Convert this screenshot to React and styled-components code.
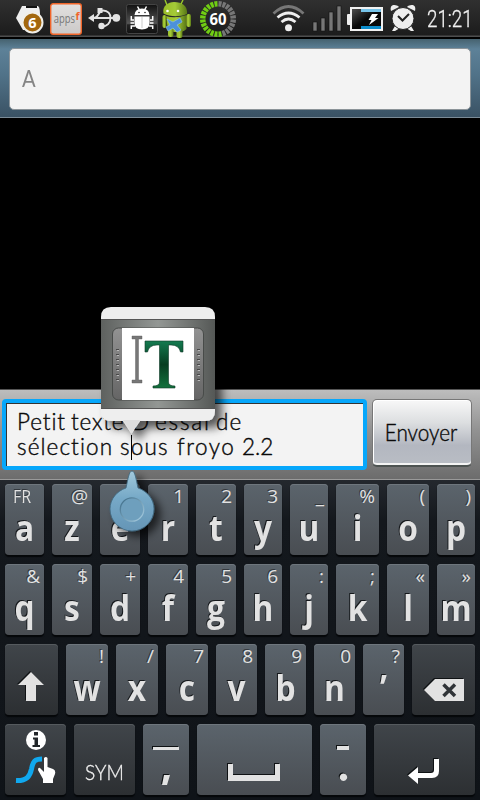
import React from "react";
import styled, { createGlobalStyle } from "styled-components";

const Global = createGlobalStyle`
  * { box-sizing: border-box; }
  body { margin: 0; background: #000; }
  svg { display: block; flex: none; }
`;

const Screen = styled.main`
  position: relative;
  width: 480px;
  height: 800px;
  overflow: hidden;
  background: #000;
  display: flex;
  flex-direction: column;
  font-family: Lato, sans-serif;
`;

const StatusBar = styled.header`
  height: 39px;
  display: flex;
  background: linear-gradient(#303030, #1c1c1c 35px, #4e4e4e 36px, #4e4e4e 37px, #000 37px);
`;

const Clock = styled.time`
  flex: none;
  width: 60px;
  margin-left: 7px;
  font: 300 23.5px/38px Roboto, sans-serif;
  color: #f2f2f2;
  transform: scaleX(0.8);
  transform-origin: left;
  -webkit-text-stroke: 0.3px #f2f2f2;
`;

const Recipients = styled.section`
  height: 79px;
  padding: 9px 9px 8px;
  border-bottom: 1px solid #7b8b97;
  background: linear-gradient(#46626f, #5d8198 10px, #517389 35px, #3a5264);
`;

const RecipientField = styled.div`
  height: 62px;
  padding-left: 12px;
  border: 1px solid #8b9398;
  border-radius: 5px;
  background: #f3f3f3;
  color: #858585;
  font: 24px/58px Lato, sans-serif;
`;

const RecipientText = styled.span`
  display: inline-block;
  transform: scaleX(0.84);
  transform-origin: left;
`;

const Thread = styled.section`
  height: 271px;
`;

const Composer = styled.section`
  height: 91px;
  display: flex;
  gap: 5px;
  padding: 9px 7px 0 2px;
  border-top: 1px solid #555;
  border-bottom: 1px solid #999;
  background: linear-gradient(#bdbdbd, #929292 45%, #6c6c6c);
`;

const MessageField = styled.div`
  width: 365px;
  height: 71px;
  padding: 6px 0 0 11px;
  border: 4px solid #06a7fb;
  border-radius: 4px;
  background: #f3f3f3;
  box-shadow: inset 1px 1px 0 #333;
`;

const Line = styled.div`
  display: flex;
  height: 24.5px;
  color: #090909;
  font-size: 22.5px;
  font-weight: 300;
  line-height: 25px;
  white-space: pre;
  -webkit-text-stroke: 0.4px #090909;
`;

const Word = styled.span`
  flex: none;
  width: ${(p) => p.$w}px;
  letter-spacing: ${(p) => p.$ls || 0}px;
`;

const SendButton = styled.button`
  width: 100px;
  height: 68px;
  padding: 0;
  border: 1px solid #777;
  border-bottom: 2px solid #4d5351;
  border-radius: 5px;
  background: linear-gradient(#f8f8f8, #dcdee0 35%, #b3b7c0 70%, #b9bdc4);
  box-shadow: inset 0 -2px 0 #f4f4f4, inset 1px 1px 0 #fff;
  color: #0a0a0a;
  font: 300 22.5px/60px Lato, sans-serif;
  -webkit-text-stroke: 0.4px #0a0a0a;
`;

const SendLabel = styled.span`
  display: block;
  margin: 0 -10px;
  transform: translateX(-1px) scaleX(0.92);
`;

const Keyboard = styled.section`
  height: 320px;
  display: flex;
  flex-direction: column;
  gap: 9px;
  padding: 4px 5px 5px;
  background: linear-gradient(#24282e, #14181d 40px, #0f1318);
`;

const KeyRow = styled.div`
  display: flex;
  gap: 8px;
  height: 71px;
`;

const KeyCap = styled.div`
  flex: none;
  width: ${(p) => p.$w}px;
  height: 71px;
  border-radius: 4px;
  background: ${(p) =>
    p.$dark ? "linear-gradient(#40454a, #2c2f32)" : "linear-gradient(#5b646c, #494d52)"};
  box-shadow: inset 0 1px 0 ${(p) => (p.$dark ? "#555a5e" : "#6e767d")}, 0 2px 1px #050709;
  color: #e2e2e2;
  font-family: "Open Sans", "Noto Sans", sans-serif;
  text-align: center;
`;

const Hint = styled.div`
  height: 24px;
  padding: 0 ${(p) => (p.$left ? 0 : 4)}px 0 ${(p) => (p.$left ? 8 : 0)}px;
  font-size: 19px;
  line-height: 24px;
  text-align: ${(p) => (p.$left ? "left" : "right")};
  text-shadow: -1px -1px 0 #33383d;
`;

const HintText = styled.span`
  display: inline-block;
  transform: scaleX(${(p) => p.$sx});
  transform-origin: ${(p) => (p.$sx < 1 ? "left" : "right")};
`;

const Letter = styled.div`
  height: 40px;
  margin: 0 -10px;
  font-size: 36px;
  font-weight: 700;
  line-height: 40px;
  transform: scaleX(0.88);
  text-shadow: -1px -1px 0 #15181b;
`;

const SymLabel = styled.div`
  padding-top: 35px;
  color: #f0f0f0;
  font: 300 22px/26px Lato, sans-serif;
  -webkit-text-stroke: 0.35px #f0f0f0;
  transform: scaleX(0.87);
`;

const Popup = styled.div`
  position: absolute;
  left: 91px;
  top: 297px;
`;

const Handle = styled.div`
  position: absolute;
  left: 100px;
  top: 465px;
`;

const Caret = styled.div`
  position: absolute;
  left: 131px;
  top: 435px;
  width: 1px;
  height: 25px;
  background: #000;
`;

function Cell({ x, w, children }) {
  return (
    <svg width={w} height="39" viewBox={`${x} 0 ${w} 39`}>
      {children}
    </svg>
  );
}

function Status() {
  const ticks = Array.from({ length: 24 }, (_, i) => i);
  return (
    <StatusBar>
      <Cell x={0} w={47}>
        <path d="M22 6H38Q40 8 40 14V22Q40 29 38 30H23L16 18Z" fill="#eee" />
        <rect x="26" y="6" width="11" height="2" fill="#111" />
        <circle cx="32.5" cy="22.5" r="10" fill="#a3670e" stroke="#f0eee8" strokeWidth="2" />
        <text x="32.5" y="28" textAnchor="middle" fill="#fff" fontFamily="Open Sans" fontWeight="700" fontSize="14.5">6</text>
      </Cell>
      <Cell x={47} w={39}>
        <defs>
          <linearGradient id="apps" x2="0" y2="1"><stop stopColor="#e2e0df" /><stop offset="1" stopColor="#cbc9c8" /></linearGradient>
        </defs>
        <rect x="50.7" y="3.7" width="30.6" height="30.6" rx="2.5" fill="url(#apps)" stroke="#f16529" strokeWidth="1.4" />
        <text x="53.7" y="22.5" fill="#777" fontFamily="Open Sans" fontSize="12.5" textLength="21.3" lengthAdjust="spacingAndGlyphs">apps</text>
        <text x="75.6" y="19.5" fill="#f16529" fontFamily="Open Sans" fontWeight="700" fontSize="10.5">f</text>
      </Cell>
      <Cell x={86} w={37}>
        <g fill="none" stroke="#e4e4e4" strokeWidth="1.9">
          <path d="M92 18H116M94 18C99 18 98 10.5 103 10.5C108 10.5 110.5 14 110.500 18C110.500 23 107 26.500 102 26.500" />
        </g>
        <path d="M88 18L94 14V22ZM97.500 8h5v5h-5Z" fill="#e4e4e4" />
        <circle cx="116.3" cy="17.8" r="3.9" fill="#e4e4e4" /><circle cx="101.5" cy="26" r="3.200" fill="#e4e4e4" />
      </Cell>
      <Cell x={123} w={37}>
        <defs><linearGradient id="bug" x2="0" y2="1"><stop stopColor="#111" /><stop offset=".65" stopColor="#555" /><stop offset=".7" stopColor="#242424" /><stop offset="1" stopColor="#111" /></linearGradient></defs>
        <rect x="126.5" y="4.5" width="31" height="29" rx="2" fill="url(#bug)" stroke="#444" />
        <path d="M134.500 15Q135 8.500 142 8.500T149.500 15ZM134.500 16.500H149.500V23Q149.500 29.500 142 29.500T134.500 23Z" fill="#fff" />
        <path d="M137.500 6.500L139.500 10M146.500 6.500L144.500 10M134 20H131.300V16M150 20H152.700V16M134 23H130.500M150 23H153.500M135 26H131.300V29M149 26H152.700V29" fill="none" stroke="#fff" strokeWidth="1.5" />
        <circle cx="139" cy="12.500" r=".8" fill="#222" /><circle cx="145" cy="12.500" r=".8" fill="#222" /><path d="M142 17V28" stroke="#aaa" strokeWidth=".6" />
      </Cell>
      <Cell x={160} w={37}>
        <defs><linearGradient id="droid" x2="1" y2="0"><stop stopColor="#98bd28" /><stop offset=".5" stopColor="#a5cb38" /><stop offset="1" stopColor="#587715" /></linearGradient></defs>
        <g fill="url(#droid)">
          <path d="M163.500 13.500C162 6 168 2 174 2C182 2 188 6 187 14C180 17 170 17 163.500 13.500Z" />
          <path d="M166 16Q175 19 186.500 15V29Q180 35 168 30Z" />
          <rect x="162.500" y="15" width="4" height="13" rx="2" /><rect x="186.500" y="14" width="4.500" height="13" rx="2" />
          <rect x="168" y="28" width="5.500" height="9" rx="2.500" /><rect x="176.500" y="28" width="6" height="10" rx="2.500" />
        </g>
        <path d="M167 5L165 0M181 4L183 0" stroke="#9aca2b" strokeWidth="1.4" />
        <circle cx="167.500" cy="11" r="1.300" fill="#fff" /><circle cx="178" cy="11" r="1.300" fill="#fff" />
        <path d="M167 19L173 22L180 18L182 22L177 25L181 30L177 32L173 28L168 31L166 27L170 25Z" fill="#4c91da" stroke="#88bce9" strokeWidth=".7" />
      </Cell>
      <Cell x={197} w={41}>
        {ticks.map((i) => (
          <path key={i} d="M216.300 1H219.700L219.300 6.500H216.700Z" fill={i < 11 ? "#777" : "#70ce13"} transform={`rotate(${i * 15 + 7.5} 218 19)`} />
        ))}
        <text x="218" y="24.500" textAnchor="middle" fill="#fff" fontFamily="Open Sans" fontWeight="700" fontSize="15.5" textLength="17" lengthAdjust="spacingAndGlyphs">60</text>
      </Cell>
      <Cell x={238} w={72}>
        <g fill="none" strokeLinecap="butt" strokeWidth="2.8">
          <path d="M273.5 13.5Q288.5 -.5 303.500 13.5" stroke="#777" />
          <path d="M277.500 17.5Q288.500 8.500 299.500 17.500M281.500 22Q288.500 16 295.500 22" stroke="#eee" />
        </g>
        <circle cx="288.500" cy="27.800" r="3.500" fill="#eee" />
      </Cell>
      <Cell x={310} w={34}>
        <g fill="#777" stroke="#111" strokeWidth=".6"><rect x="313" y="22" width="4" height="9" /><rect x="321" y="18" width="4" height="13" /><rect x="329" y="12" width="4" height="19" /><rect x="337" y="6" width="4" height="25" /></g>
      </Cell>
      <Cell x={344} w={42}>
        <defs><linearGradient id="battery" x2="1" y2="1"><stop stopColor="#555" /><stop offset=".5" stopColor="#080808" /></linearGradient></defs>
        <rect x="347" y="14" width="5" height="11" rx="1" fill="#eee" />
        <rect x="351" y="8" width="31" height="22" fill="url(#battery)" stroke="#f1f1f1" strokeWidth="2" />
        <path d="M361 9H381V12H361Z" fill="#77c3e8" /><path d="M361 26H381V29H361Z" fill="#0b8bc9" />
        <path d="M372 14H378L375 18H378.500L369 25L371.500 20H368.500Z" fill="#fff" />
      </Cell>
      <Cell x={386} w={34}>
        <g fill="#eee">
          <path d="M391 11C389 4 396 4 399 7ZM415 11C417 4 410 4 407 7Z" />
          <path d="M395 26L392 31H395L400 28ZM411 26L414 31H411L406 28Z" />
          <circle cx="403" cy="18.500" r="11" stroke="#222" />
        </g>
        <path d="M398 16L402.500 20.500L409 14" fill="none" stroke="#222" strokeWidth="2" />
      </Cell>
      <Clock>21:21</Clock>
    </StatusBar>
  );
}

function Key({ w, hint, letter, left }) {
  return (
    <KeyCap $w={w}>
      <Hint $left={left}>
        <HintText $sx={left ? 0.84 : 1}>{hint}</HintText>
      </Hint>
      <Letter>{letter}</Letter>
    </KeyCap>
  );
}

function IconKey({ w, dark, children }) {
  return (
    <KeyCap $w={w} $dark={dark}>
      <svg width={w} height="71" viewBox={`0 0 ${w} 71`}>{children}</svg>
    </KeyCap>
  );
}

function Embossed({ d, fill = "#e2e2e2" }) {
  return (
    <>
      <path d={d} fill="#0f1214" transform="translate(-1 -1)" />
      <path d={d} fill={fill} />
    </>
  );
}

const top = [["FR", "a", 39], ["@", "z", 40], ["", "e", 40], ["1", "r", 40], ["2", "t", 40], ["3", "y", 38], ["_", "u", 38], ["%", "i", 43], ["(", "o", 42], [")", "p", 38]];
const middle = [["&", "q", 39], ["$", "s", 40], ["+", "d", 40], ["4", "f", 40], ["5", "g", 40], ["6", "h", 38], [":", "j", 38], [";", "k", 43], ["«", "l", 42], ["»", "m", 38]];
const lower = [["!", "w", 42], ["/", "x", 42], ["7", "c", 42], ["8", "v", 41], ["9", "b", 41], ["0", "n", 41]];

const renderKeys = (keys) => keys.map(([hint, letter, w]) => (
  <Key key={letter} hint={hint} letter={letter} w={w} left={hint === "FR"} />
));

function SelectionPopup() {
  return (
    <Popup>
      <svg width="145" height="155" viewBox="91 297 145 155">
        <defs>
          <filter id="shade" x="-20%" y="-20%" width="150%" height="150%"><feDropShadow dx="7" dy="7" stdDeviation="5" floodOpacity=".65" /></filter>
          <linearGradient id="metal" x2="1" y2="0"><stop stopColor="#5e615f" /><stop offset=".5" stopColor="#939794" /><stop offset="1" stopColor="#555856" /></linearGradient>
          <linearGradient id="rail" x2="0" y2="1"><stop stopColor="#929292" /><stop offset="1" stopColor="#656565" /></linearGradient>
          <linearGradient id="green" x2="0" y2="1"><stop stopColor="#147a50" /><stop offset=".5" stopColor="#063d20" /><stop offset="1" stopColor="#13713d" /></linearGradient>
        </defs>
        <path d="M111 307H205Q215 307 215 317V411Q215 421 205 421H140L131.500 433.500L123 421H111Q101 421 101 411V317Q101 307 111 307Z" fill="#eee" filter="url(#shade)" />
        <path d="M123 420H140L131.500 433.500Z" fill="#dedede" />
        <rect x="101" y="319" width="114" height="89.500" fill="url(#metal)" />
        <path d="M101 319.500H215M101 408.500H215" stroke="#555" />
        <rect x="112.500" y="328" width="91" height="72" rx="6" fill="url(#rail)" stroke="#484b49" />
        <rect x="122" y="328" width="72" height="72" fill="#fff" />
        {[0, 1, 2, 3, 4, 5, 6].map((i) => (
          <g key={i}><path d={`M116 ${349 + i * 5}h3v2h-3ZM197 ${349 + i * 5}h3v2h-3Z`} fill="#484848" /><path d={`M116.500 ${350.500 + i * 5}h2.500M197.500 ${350.500 + i * 5}h2.500`} stroke="#bbb" /></g>
        ))}
        <path d="M132 336H142V339H138.500V380H142V383H132V380H135.500V339H132Z" fill="#777" stroke="#555" strokeWidth=".4" />
        <path d="M145 341H183V352H180.500Q179 345 171 345H168.500V382Q168.500 386 175 386V388H153V386Q159.500 386 159.500 382V345H157Q149 345 147.500 352H145Z" fill="url(#green)" stroke="#103b2a" strokeWidth=".6" />
      </svg>
    </Popup>
  );
}

function CursorHandle() {
  return (
    <Handle>
      <svg width="74" height="80" viewBox="100 465 74 80">
        <defs>
          <filter id="drop" x="-20%" y="-20%" width="160%" height="150%"><feDropShadow dx="6" dy="5" stdDeviation="4" floodOpacity=".65" /></filter>
          <linearGradient id="blue" x2="0" y2="1"><stop stopColor="#a2c9dc" /><stop offset=".45" stopColor="#76a9c7" /><stop offset="1" stopColor="#6595b6" /></linearGradient>
          <linearGradient id="ring" x2="1" y2="1"><stop stopColor="#386783" /><stop offset="1" stopColor="#add2e5" /></linearGradient>
        </defs>
        <path d="M132 471C135 471 136 479 138 488C147 491 154 499 154 509A22 22 0 0 1 110 509C110 499 117 491 126 488C128 479 129 471 132 471Z" fill="url(#blue)" stroke="#3e667d" strokeWidth=".8" filter="url(#drop)" />
        <circle cx="132" cy="509.500" r="11.700" fill="#6e9fbd" stroke="url(#ring)" strokeWidth="1.300" />
      </svg>
    </Handle>
  );
}

export default function App() {
  return (
    <Screen>
      <Global />
      <Status />
      <Recipients><RecipientField><RecipientText>A</RecipientText></RecipientField></Recipients>
      <Thread />
      <Composer>
        <MessageField>
          <Line><Word $w={54} $ls={0.9}>Petit</Word><Word $w={61} $ls={0.8}>texte</Word><Word $w={23}>D'</Word><Word $w={61} $ls={1.8}>essai</Word><Word $w={35} $ls={1.2}>de</Word></Line>
          <Line><Word $w={103} $ls={1.1}>sélection</Word><Word $w={57} $ls={1.2}>sous</Word><Word $w={65} $ls={1.5}>froyo</Word><Word $w={40}>2.2</Word></Line>
        </MessageField>
        <SendButton><SendLabel>Envoyer</SendLabel></SendButton>
      </Composer>
      <Keyboard>
        <KeyRow>{renderKeys(top)}</KeyRow>
        <KeyRow>{renderKeys(middle)}</KeyRow>
        <KeyRow>
          <IconKey w={53} dark><Embossed d="M26 28L39 41H31V57H21V41H13Z" /></IconKey>
          {renderKeys(lower)}
          <Key w={41} hint="?" letter="’" />
          <IconKey w={63} dark>
            <Embossed d="M23 35H52V57H23L12 46Z" />
            <path d="M31.500 40.500L43 52M43 40.500L31.500 52" stroke="#303438" strokeWidth="3.500" />
          </IconKey>
        </KeyRow>
        <KeyRow>
          <IconKey w={61} dark>
            <circle cx="31" cy="16" r="10" fill="#fff" />
            <path d="M29 8H33V11.500H29ZM28 13.500H33V21H35V23H27.500V21H29.500V15.500H28Z" fill="#222629" />
            <path d="M11 56.500C22 57 25 52 26.500 45C28 37 30 35 37 35" fill="none" stroke="#10a8ef" strokeWidth="5" />
            <path d="M39 34Q41 32 42.500 34V43L48 45Q51 46 50 50L48 55V59H38V55L33 46Q33 43 35 44L39 48Z" fill="#fff" />
          </IconKey>
          <KeyCap $w={61} $dark><SymLabel>SYM</SymLabel></KeyCap>
          <IconKey w={46}><Embossed d="M10 23H36V26H10ZM21 51H27L24 61H19Z" /></IconKey>
          <IconKey w={115}><Embossed d="M31 40H36V51H78V40H83V57H31Z" /></IconKey>
          <IconKey w={46}><Embossed d="M17 22H29V26H17ZM23.500 49.500A3.700 3.700 0 1 1 23.400 49.500Z" /></IconKey>
          <IconKey w={101} dark><Embossed fill="#fff" d="M60 35H65V47Q65 54 58 54H44V60L34 51.500L44 43V49H57Q60 49 60 46Z" /></IconKey>
        </KeyRow>
      </Keyboard>
      <Caret />
      <SelectionPopup />
      <CursorHandle />
    </Screen>
  );
}
